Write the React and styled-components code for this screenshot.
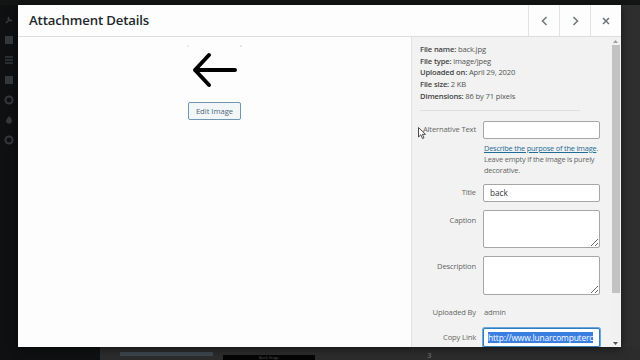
import React from "react";
import styled, { createGlobalStyle } from "styled-components";

const GlobalStyle = createGlobalStyle`
  html, body { margin: 0; padding: 0; background: #141515; }
  body { font-family: "Open Sans", "Noto Sans", sans-serif; }
  * { box-sizing: border-box; }
`;

const Screen = styled.div`
  position: relative;
  width: 640px;
  height: 360px;
  overflow: hidden;
  display: flex;
  flex-direction: column;
  background: #141515;
`;

const AdminBar = styled.div`
  height: 5px;
  background: #131414;
  flex: none;
`;

const AdminBody = styled.div`
  flex: 1;
  display: grid;
  grid-template-columns: 100px 1fr;
`;

const AdminMenu = styled.div`
  background: #0f1011;
  display: flex;
  flex-direction: column;
  align-items: flex-start;
  gap: 10px;
  padding: 10px 0 0 4px;
`;

const MenuIcon = styled.svg`
  width: 10px;
  height: 10px;
  color: #35383b;
`;

const AdminContent = styled.div`
  background: #2d2e2d;
  display: flex;
  flex-direction: column;
  justify-content: flex-end;
`;

const BottomStrip = styled.div`
  height: 13px;
  display: flex;
  align-items: flex-start;
  padding: 4px 0 0 20px;
  gap: 10px;
  background: #2b2c2b;
`;

const FaintBar = styled.div`
  width: 93px;
  height: 4px;
  margin-top: 1px;
  background: #3d4650;
`;

const BlackBox = styled.div`
  width: 92px;
  height: 9px;
  margin-top: 4px;
  background: #050505;
  color: #555;
  font-size: 4px;
  text-align: center;
`;

const PageNum = styled.div`
  margin-left: 102px;
  color: #7c7e7c;
  font-size: 8px;
  line-height: 8px;
`;

const Modal = styled.div`
  position: absolute;
  left: 18px;
  top: 5px;
  width: 603px;
  height: 342px;
  background: #fcfdfc;
  display: flex;
  flex-direction: column;
  box-shadow: 0 2px 8px rgba(0, 0, 0, 0.5);
  overflow: hidden;
`;

const Header = styled.div`
  height: 32px;
  flex: none;
  display: flex;
  border-bottom: 1px solid #dcdddc;
`;

const Title = styled.h1`
  flex: 1;
  margin: 0;
  padding: 0 0 0 11px;
  font-size: 13.2px;
  font-weight: 600;
  line-height: 31px;
  color: #23282d;
  letter-spacing: -0.15px;
`;

const NavButton = styled.div`
  width: 31px;
  display: flex;
  align-items: center;
  justify-content: center;
  border-left: 1px solid #e2e3e2;
  color: #6f7479;
`;

const Body = styled.div`
  flex: 1;
  min-height: 0;
  display: flex;
`;

const Preview = styled.div`
  flex: 1;
  display: flex;
  flex-direction: column;
  align-items: center;
  padding-top: 8px;
`;

const EditButton = styled.button`
  margin-top: 11px;
  width: 53px;
  height: 18px;
  padding: 0;
  border: 1px solid #6f97b3;
  border-radius: 2px;
  background: #f3f6f7;
  color: #45667d;
  font-family: inherit;
  font-size: 7.6px;
`;

const Sidebar = styled.div`
  width: 210px;
  flex: none;
  display: flex;
  position: relative;
  background: #f1f2f1;
  border-left: 1px solid #e0e1e0;
`;

const SideContent = styled.div`
  flex: 1;
  padding: 7px 0 0 8px;
  font-size: 7.6px;
  color: #666;
  letter-spacing: -0.15px;
`;

const DetailLine = styled.div`
  line-height: 11.7px;
  color: #555;
  white-space: nowrap;
  b { font-weight: 600; color: #444; }
`;

const Divider = styled.div`
  width: 160px;
  height: 1px;
  background: #dddedd;
  margin: 7px 0 10px;
`;

const Row = styled.div`
  display: grid;
  grid-template-columns: 56px 117px;
  column-gap: 7px;
  align-items: ${(p) => (p.$top ? "start" : "center")};
  margin-bottom: ${(p) => p.$mb || 8}px;
`;

const Label = styled.label`
  text-align: right;
  color: #666;
  white-space: nowrap;
  line-height: 11px;
  padding-top: ${(p) => p.$pt || 0}px;
`;

const TextInput = styled.input`
  width: 117px;
  height: 18px;
  border: 1px solid #a5a7a5;
  border-radius: 2px;
  background: #fff;
  font-family: inherit;
  font-size: 8.2px;
  color: #32373c;
  padding: 0 6px;
  outline: none;
`;

const TextArea = styled.textarea`
  width: 117px;
  height: ${(p) => p.$h}px;
  border: 1px solid #a5a7a5;
  border-radius: 2px;
  background: #fff;
  font-family: inherit;
  font-size: 7.8px;
  padding: 3px 6px;
  resize: vertical;
  display: block;
  outline: none;
`;

const Help = styled.div`
  grid-column: 2;
  line-height: 11px;
  color: #666;
  margin: 4px -8px 0 1px;
  font-size: 7.4px;
  letter-spacing: -0.2px;
  a { color: #1f6c95; text-decoration: underline; }
`;

const Value = styled.div`
  color: #666;
  line-height: 11px;
  padding-left: 1px;
`;

const LinkBox = styled.div`
  width: 117px;
  height: 19px;
  border: 1px solid #2f7fc0;
  box-shadow: 0 0 0 1px #6aa6d8;
  border-radius: 2px;
  background: #fff;
  padding: 3px 0 0 4px;
  overflow: hidden;
  white-space: nowrap;
  font-size: 8.4px;
  line-height: 11px;
  span { background: #3a7ee2; color: #fff; }
`;

const Scrollbar = styled.div`
  width: 9px;
  flex: none;
  display: flex;
  flex-direction: column;
  align-items: center;
  background: #f1f1f1;
  margin-right: 1px;
`;

const ScrollArrow = styled.div`
  height: 8px;
  display: flex;
  align-items: center;
  justify-content: center;
  flex: none;
`;

const Thumb = styled.div`
  width: 8px;
  height: 248px;
  background: #c1c2c1;
  flex: none;
`;

const Spacer = styled.div`
  flex: 1;
`;

const Cursor = styled.svg`
  position: absolute;
  left: 6px;
  top: 90px;
  width: 8px;
  height: 12px;
`;

const Chevron = ({ dir }) => (
  <svg width="7" height="10" viewBox="0 0 7 10">
    <path
      d={dir === "left" ? "M5.5 1 L1.5 5 L5.5 9" : "M1.5 1 L5.5 5 L1.5 9"}
      fill="none"
      stroke="currentColor"
      strokeWidth="1.5"
    />
  </svg>
);

const CloseIcon = () => (
  <svg width="8" height="8" viewBox="0 0 8 8">
    <path d="M1 1 L7 7 M7 1 L1 7" stroke="currentColor" strokeWidth="1.5" />
  </svg>
);

const menuIcons = [
  <path key="a" d="M2 8 L6 4 M5 2 a2 2 0 1 0 3 3" stroke="currentColor" strokeWidth="1.6" fill="none" />,
  <rect key="b" x="1" y="1" width="8" height="8" fill="currentColor" />,
  <path key="c" d="M1 2 H9 M1 5 H9 M1 8 H9" stroke="currentColor" strokeWidth="1.6" />,
  <rect key="d" x="1" y="1" width="8" height="8" fill="currentColor" />,
  <circle key="e" cx="5" cy="5" r="3.5" stroke="currentColor" strokeWidth="2" fill="none" />,
  <path key="f" d="M5 1 C8 4 9 6 7 8 C5 10 2 8 2 6 C2 4 4 3 5 1 Z" fill="currentColor" />,
  <circle key="g" cx="5" cy="5" r="3.5" stroke="currentColor" strokeWidth="2" fill="none" />,
];

export default function App() {
  return (
    <>
      <GlobalStyle />
      <Screen>
        <AdminBar />
        <AdminBody>
          <AdminMenu>
            {menuIcons.map((icon, i) => (
              <MenuIcon key={i} viewBox="0 0 10 10">
                {icon}
              </MenuIcon>
            ))}
          </AdminMenu>
          <AdminContent>
            <BottomStrip>
              <FaintBar />
              <BlackBox>Back Stage</BlackBox>
              <PageNum>3</PageNum>
            </BottomStrip>
          </AdminContent>
        </AdminBody>

        <Modal>
          <Header>
            <Title>Attachment Details</Title>
            <NavButton>
              <Chevron dir="left" />
            </NavButton>
            <NavButton>
              <Chevron dir="right" />
            </NavButton>
            <NavButton>
              <CloseIcon />
            </NavButton>
          </Header>
          <Body>
            <Preview>
              <svg width="56" height="46" viewBox="0 0 56 46">
                <circle cx="1" cy="1" r="0.6" fill="#bbb" />
                <circle cx="54" cy="1" r="0.6" fill="#999" />
                <path
                  d="M8 25 H48 M22 10 L8 25 L22 40"
                  fill="none"
                  stroke="#000"
                  strokeWidth="4"
                  strokeLinecap="round"
                  strokeLinejoin="round"
                />
              </svg>
              <EditButton>Edit Image</EditButton>
            </Preview>
            <Sidebar>
              <SideContent>
                <DetailLine><b>File name:</b> back.jpg</DetailLine>
                <DetailLine><b>File type:</b> image/jpeg</DetailLine>
                <DetailLine><b>Uploaded on:</b> April 29, 2020</DetailLine>
                <DetailLine><b>File size:</b> 2 KB</DetailLine>
                <DetailLine><b>Dimensions:</b> 86 by 71 pixels</DetailLine>
                <Divider />
                <Row $mb={8}>
                  <Label>Alternative Text</Label>
                  <TextInput defaultValue="" />
                  <Help>
                    <a>Describe the purpose of the image</a>.
                    <br />
                    Leave empty if the image is purely
                    <br />
                    decorative.
                  </Help>
                </Row>
                <Row>
                  <Label>Title</Label>
                  <TextInput defaultValue="back" />
                </Row>
                <Row $top>
                  <Label $pt={5}>Caption</Label>
                  <TextArea $h={38} />
                </Row>
                <Row $top $mb={12}>
                  <Label $pt={5}>Description</Label>
                  <TextArea $h={39} />
                </Row>
                <Row $mb={10}>
                  <Label>Uploaded By</Label>
                  <Value>admin</Value>
                </Row>
                <Row>
                  <Label>Copy Link</Label>
                  <LinkBox>
                    <span>http://www.lunarcomputerc</span>
                  </LinkBox>
                </Row>
              </SideContent>
              <Scrollbar>
                <ScrollArrow>
                  <svg width="5" height="3" viewBox="0 0 5 3">
                    <path d="M0 3 L2.5 0 L5 3 Z" fill="#a0a0a0" />
                  </svg>
                </ScrollArrow>
                <Thumb />
                <Spacer />
                <ScrollArrow>
                  <svg width="5" height="3" viewBox="0 0 5 3">
                    <path d="M0 0 L2.5 3 L5 0 Z" fill="#505050" />
                  </svg>
                </ScrollArrow>
              </Scrollbar>
              <Cursor viewBox="0 0 8 12">
                <path d="M0.5 0.5 L0.5 10 L2.8 7.8 L4.5 11.5 L6 10.8 L4.4 7.3 L7.5 7.3 Z" fill="#fff" stroke="#222" strokeWidth="0.8" />
              </Cursor>
            </Sidebar>
          </Body>
        </Modal>
      </Screen>
    </>
  );
}
